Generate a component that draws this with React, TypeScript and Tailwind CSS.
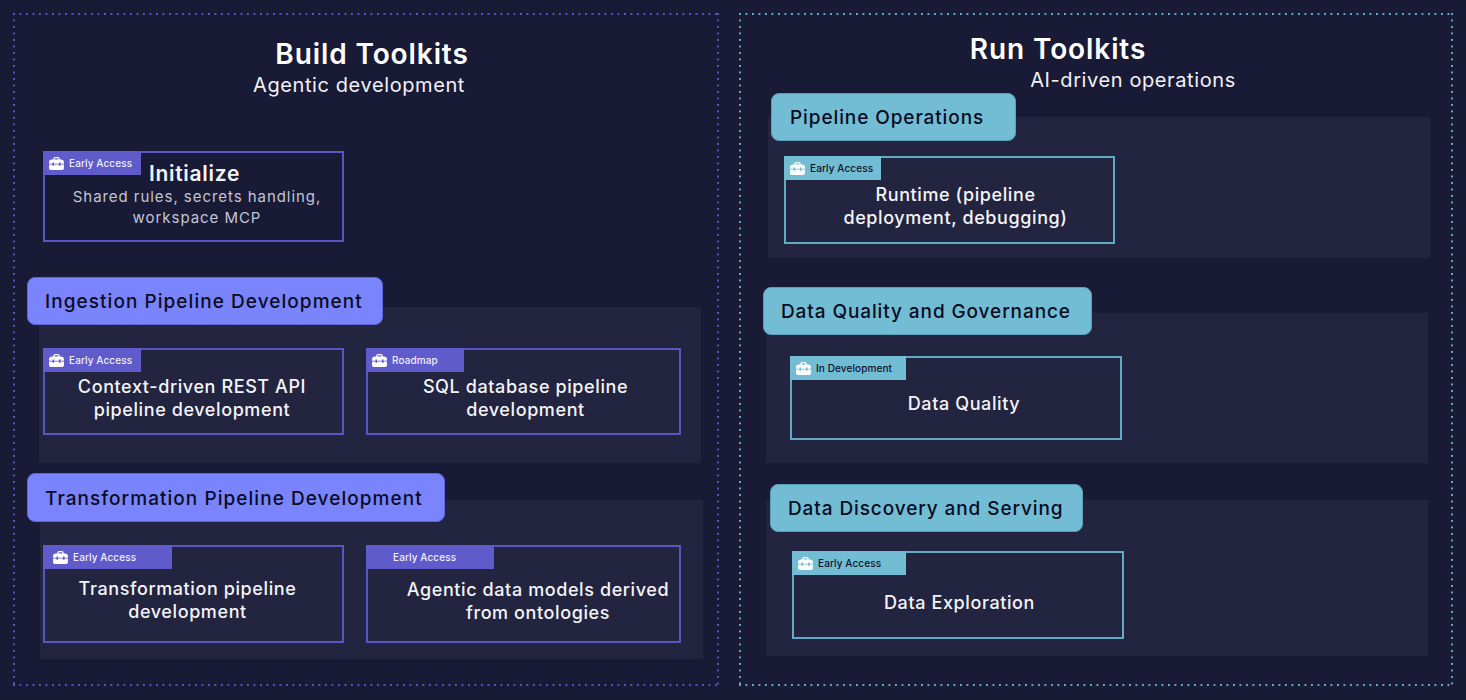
import type { ReactNode } from 'react'

const font = { fontFamily: 'Inter, sans-serif' }

function Toolbox({ className }: { className: string }) {
  return (
    <svg viewBox="0 0 16 14" className={className} fill="currentColor">
      <path d="M4.6 3.4V1.8C4.6.8 5.4 0 6.4 0h3.2c1 0 1.8.8 1.8 1.8v1.6H10V1.4H6v2z" />
      <path d="M0 5.4C0 4 1.4 2.8 3 2.8h10c1.6 0 3 1.2 3 2.6v1.8h-3.6V6h-1.8v1.2H5.4V6H3.6v1.2H0z" />
      <path d="M0 8.2h3.6v1.2h1.8V8.2h5.2v1.2h1.8V8.2H16v4c0 1-.8 1.8-1.8 1.8H1.8C.8 14 0 13.2 0 12.2z" />
    </svg>
  )
}

interface CardProps {
  tag: string
  tagClass: string
  iconClass: string
  className: string
  children: ReactNode
}

function Card({ tag, tagClass, iconClass, className, children }: CardProps) {
  return (
    <div className={`relative flex flex-col items-center justify-center border-2 text-center ${className}`}>
      <div className={`absolute -top-[2px] -left-[2px] flex h-[24px] items-center pt-[1px] text-[10px] font-medium tracking-[0.1px] ${tagClass}`}>
        <Toolbox className={iconClass} />
        <span>{tag}</span>
      </div>
      {children}
    </div>
  )
}

const cardText = 'text-[18px] font-medium leading-[23px] tracking-[0.6px] text-[#f4f4f8]'
const buildCard = 'border-[#5a55c0]'
const runCard = 'border-[#62abc4]'
const buildTag = 'bg-[#605bcb] text-[#eeeefa]'
const runTag = 'bg-[#72bcd4] text-[#10122c]'
const pillBuild = 'relative z-10 flex h-[48px] items-center rounded-lg border border-[#5f68d8] bg-[#7a85fd] text-[19px] font-medium tracking-[1.05px] text-[#0b0c22]'
const pillRun = 'relative z-10 flex h-[48px] items-center rounded-lg border border-[#5aa0b8] bg-[#72bcd4] text-[19px] font-medium tracking-[0.9px] text-[#0b0c22]'
const icon = 'mr-[5px] h-[13px] w-[15px] text-white'
const dotsBuild =
  'bg-[linear-gradient(to_right,#5a55c8_2px,transparent_2px),linear-gradient(to_right,#5a55c8_2px,transparent_2px),linear-gradient(to_bottom,#5a55c8_2px,transparent_2px),linear-gradient(to_bottom,#5a55c8_2px,transparent_2px)]'
const dotsRun =
  'bg-[linear-gradient(to_right,#5fb0c8_2px,transparent_2px),linear-gradient(to_right,#5fb0c8_2px,transparent_2px),linear-gradient(to_bottom,#5fb0c8_2px,transparent_2px),linear-gradient(to_bottom,#5fb0c8_2px,transparent_2px)]'
const dotsLayout =
  '[background-size:6.5px_2px,6.5px_2px,2px_6.5px,2px_6.5px] [background-position:0_0,0_100%,0_0,100%_0] [background-repeat:repeat-x,repeat-x,repeat-y,repeat-y]'

export default function App() {
  return (
    <div className="flex h-[700px] w-[1466px] gap-[20px] overflow-hidden bg-[#181a36] pt-[13px] pl-[13px]" style={font}>
      {/* build side */}
      <div className={`h-[673px] w-[706px] p-[2px] ${dotsBuild} ${dotsLayout}`}>
        <h2 className="mt-[22px] pl-[12px] text-center text-[28px] font-semibold leading-[34px] tracking-[0.9px] text-white">Build Toolkits</h2>
        <p className="mt-[1px] h-[26px] pr-[14px] text-center text-[20px] leading-[26px] tracking-[0.6px] text-[#f2f2f6]">Agentic development</p>

        <Card
          tag="Early Access"
          tagClass={`w-[98px] pl-[6px] ${buildTag}`}
          iconClass={icon}
          className={`mt-[53px] ml-[28px] h-[91px] w-[301px] pb-[4px] ${buildCard}`}
        >
          <div className="pl-[2px] text-[21px] font-semibold leading-[25px] tracking-[0.7px] text-[#f4f4f8]">Initialize</div>
          <div className="pl-[7px] text-[15px] leading-[21px] tracking-[0.95px] text-[#c4c5d4]">
            Shared rules, secrets handling,
            <br />
            workspace MCP
          </div>
        </Card>

        <div className={`mt-[35px] ml-[12px] w-[356px] -mb-[18px] pt-[2px] pl-[17px] ${pillBuild}`}>Ingestion Pipeline Development</div>
        <div className="ml-[24px] flex h-[156px] w-[662px] gap-[22px] bg-[#23243f] pt-[41px] pl-[4px]">
          <Card
            tag="Early Access"
            tagClass={`w-[98px] pl-[6px] ${buildTag}`}
            iconClass={icon}
            className={`h-[87px] w-[301px] pt-[13px] pr-[3px] ${buildCard} ${cardText}`}
          >
            Context-driven REST API
            <br />
            pipeline development
          </Card>
          <Card
            tag="Roadmap"
            tagClass={`w-[98px] pl-[6px] ${buildTag}`}
            iconClass={icon}
            className={`h-[87px] w-[315px] pt-[13px] pl-[4px] ${buildCard} ${cardText}`}
          >
            SQL database pipeline
            <br />
            development
          </Card>
        </div>

        <div className={`mt-[10px] ml-[12px] h-[49px] w-[418px] -mb-[22px] pt-[3px] pl-[17px] ${pillBuild}`}>Transformation Pipeline Development</div>
        <div className="ml-[25px] flex h-[159px] w-[663px] gap-[22px] bg-[#23243f] pt-[45px] pl-[3px]">
          <Card
            tag="Early Access"
            tagClass={`w-[129px] pl-[8px] ${buildTag}`}
            iconClass="mr-[3px] h-[13px] w-[19px] text-white"
            className={`h-[98px] w-[301px] pt-[12px] pr-[12px] ${buildCard} ${cardText}`}
          >
            Transformation pipeline
            <br />
            development
          </Card>
          <Card
            tag="Early Access"
            tagClass={`w-[128px] pl-[27px] ${buildTag}`}
            iconClass="hidden"
            className={`h-[98px] w-[315px] pt-[14px] pl-[29px] ${buildCard} ${cardText}`}
          >
            Agentic data models derived
            <br />
            from ontologies
          </Card>
        </div>
      </div>

      {/* run side */}
      <div className={`h-[673px] w-[714px] p-[2px] ${dotsRun} ${dotsLayout}`}>
        <h2 className="mt-[17px] pr-[76px] text-center text-[28px] font-semibold leading-[34px] tracking-[0.9px] text-white">Run Toolkits</h2>
        <p className="mt-[1px] h-[26px] pl-[74px] text-center text-[20px] leading-[26px] tracking-[0.6px] text-[#f2f2f6]">AI-driven operations</p>

        <div className={`ml-[30px] w-[245px] -mb-[24px] pt-[3px] pl-[18px] ${pillRun}`}>Pipeline Operations</div>
        <div className="ml-[27px] h-[141px] w-[662px] bg-[#23243f] pt-[39px] pl-[16px]">
          <Card
            tag="Early Access"
            tagClass={`w-[97px] pl-[6px] ${runTag}`}
            iconClass={icon}
            className={`h-[88px] w-[331px] pt-[12px] pl-[12px] ${runCard} ${cardText}`}
          >
            Runtime (pipeline
            <br />
            deployment, debugging)
          </Card>
        </div>

        <div className={`mt-[29px] ml-[22px] w-[329px] -mb-[22px] pt-[2px] pl-[17px] ${pillRun}`}>Data Quality and Governance</div>
        <div className="ml-[25px] h-[150px] w-[662px] bg-[#23243f] pt-[43px] pl-[24px]">
          <Card
            tag="In Development"
            tagClass={`w-[116px] pl-[6px] ${runTag}`}
            iconClass={icon}
            className={`h-[84px] w-[332px] pt-[11px] pl-[16px] ${runCard} ${cardText}`}
          >
            Data Quality
          </Card>
        </div>

        <div className={`mt-[21px] ml-[29px] w-[313px] -mb-[32px] pt-[2px] pl-[17px] ${pillRun}`}>Data Discovery and Serving</div>
        <div className="ml-[25px] h-[156px] w-[662px] bg-[#23243f] pt-[51px] pl-[26px]">
          <Card
            tag="Early Access"
            tagClass={`w-[114px] pl-[6px] ${runTag}`}
            iconClass={icon}
            className={`h-[88px] w-[332px] pt-[14px] pl-[3px] ${runCard} ${cardText}`}
          >
            Data Exploration
          </Card>
        </div>
      </div>
    </div>
  )
}
